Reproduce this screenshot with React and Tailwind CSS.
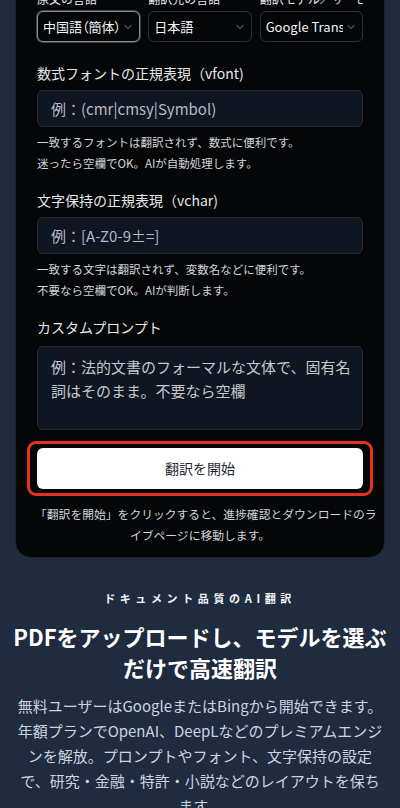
import { ChevronDown } from 'lucide-react'

const font = { fontFamily: '"Noto Sans CJK JP", "Noto Sans", sans-serif' }

function FakeSelect({ value, focused }) {
  return (
    <div
      className={
        'flex items-center h-[31px] rounded-md bg-[#050607] pl-[5px] pr-[5px] ' +
        (focused ? 'border border-[#8a909a] shadow-[0_0_0_1px_#3b424d]' : 'border border-[#2a313c]')
      }
    >
      <span className="flex-1 overflow-hidden whitespace-nowrap text-[13px] text-[#f3f4f6] [font-feature-settings:'palt']">{value}</span>
      <ChevronDown className="w-[12px] h-[12px] text-[#9ca3af] shrink-0 ml-[2px]" strokeWidth={1.6} />
    </div>
  )
}

export default function App() {
  return (
    <div className="min-h-screen bg-[#1f2b3e] px-[15px] overflow-hidden" style={font}>
      {/* Translate form card */}
      <div className="-mt-[30px] rounded-2xl bg-[#050607] border border-[#1c2430] px-[21px] pt-[20px] pb-[12px]">
        <div className="grid grid-cols-3 gap-2">
          <div>
            <p className="text-[12px] leading-[16px] text-[#e5e7eb] mb-[4px] whitespace-nowrap overflow-hidden">原文の言語</p>
            <FakeSelect value="中国語（簡体）" focused />
          </div>
          <div>
            <p className="text-[12px] leading-[16px] text-[#e5e7eb] mb-[4px] whitespace-nowrap overflow-hidden">翻訳先の言語</p>
            <FakeSelect value="日本語" />
          </div>
          <div>
            <p className="text-[12px] leading-[16px] text-[#e5e7eb] mb-[4px] whitespace-nowrap overflow-hidden">翻訳モデル／サービス</p>
            <FakeSelect value="Google Translate" />
          </div>
        </div>

        {/* vfont */}
        <div className="mt-[20px]">
          <label className="block text-[14px] leading-[22px] text-[#e5e7eb] mb-[6px] whitespace-nowrap">数式フォントの正規表現（vfont)</label>
          <input
            type="text"
            placeholder="例：(cmr|cmsy|Symbol)"
            className="w-full h-[37px] px-[13px] rounded-md bg-[#0f1521] border border-[#222a37] text-[15px] text-[#e5e7eb] placeholder:text-[#b6bbc3] outline-none"
          />
          <div className="mt-[5px] text-[11.5px] leading-[21px] text-[#d1d5db] whitespace-nowrap">
            <p>一致するフォントは翻訳されず、数式に便利です。</p>
            <p>迷ったら空欄でOK。AIが自動処理します。</p>
          </div>
        </div>

        {/* vchar */}
        <div className="mt-[15px]">
          <label className="block text-[14px] leading-[22px] text-[#e5e7eb] mb-[6px] whitespace-nowrap">文字保持の正規表現（vchar)</label>
          <input
            type="text"
            placeholder="例：[A-Z0-9±=]"
            className="w-full h-[37px] px-[13px] rounded-md bg-[#0f1521] border border-[#222a37] text-[15px] text-[#e5e7eb] placeholder:text-[#b6bbc3] outline-none"
          />
          <div className="mt-[5px] text-[11.5px] leading-[21px] text-[#d1d5db] whitespace-nowrap">
            <p>一致する文字は翻訳されず、変数名などに便利です。</p>
            <p>不要なら空欄でOK。AIが判断します。</p>
          </div>
        </div>

        {/* custom prompt */}
        <div className="mt-[15px]">
          <label className="block text-[14px] leading-[22px] text-[#e5e7eb] mb-[8px]">カスタムプロンプト</label>
          <textarea
            placeholder={'例：法的文書のフォーマルな文体で、固有名\n詞はそのまま。不要なら空欄'}
            className="block w-full h-[84px] pl-[13px] pr-[4px] pt-[8px] rounded-md bg-[#0f1521] border border-[#222a37] text-[15px] leading-[24px] text-[#e5e7eb] placeholder:text-[#c4c8cf] outline-none resize-none"
          />
        </div>

        <div className="relative mt-[18px]">
          <button className="w-full h-[41px] rounded-md bg-white text-[14px] text-[#1f2937]">翻訳を開始</button>
          <div className="absolute -left-[10px] -right-[10px] -top-[7px] -bottom-[7px] rounded-[9px] border-[3px] border-[#e5321e] pointer-events-none" />
        </div>

        <p className="mt-[14px] -mx-[2px] text-center text-[11.8px] leading-[21px] text-[#d1d5db] whitespace-nowrap">
          「翻訳を開始」をクリックすると、進捗確認とダウンロードのラ<br />イブページに移動します。
        </p>
      </div>

      {/* Intro */}
      <div className="text-center pt-[32px]">
        <p className="text-[11px] leading-[16px] font-bold tracking-[0.42em] text-[#f3f4f6]">ドキュメント品質のAI翻訳</p>
        <h2 className="mt-[15px] -mx-[4px] text-[22px] leading-[31px] font-bold text-white whitespace-nowrap">
          PDFをアップロードし、モデルを選ぶ<br />だけで高速翻訳
        </h2>
        <p className="mt-[10px] -mx-[4px] text-[15px] leading-[25px] text-[#cbd5e1] whitespace-nowrap">
          無料ユーザーはGoogleまたはBingから開始できます。<br />
          年額プランでOpenAI、DeepLなどのプレミアムエンジ<br />
          ンを解放。プロンプトやフォント、文字保持の設定<br />
          で、研究・金融・特許・小説などのレイアウトを保ち<br />
          ます。
        </p>
      </div>
    </div>
  )
}
